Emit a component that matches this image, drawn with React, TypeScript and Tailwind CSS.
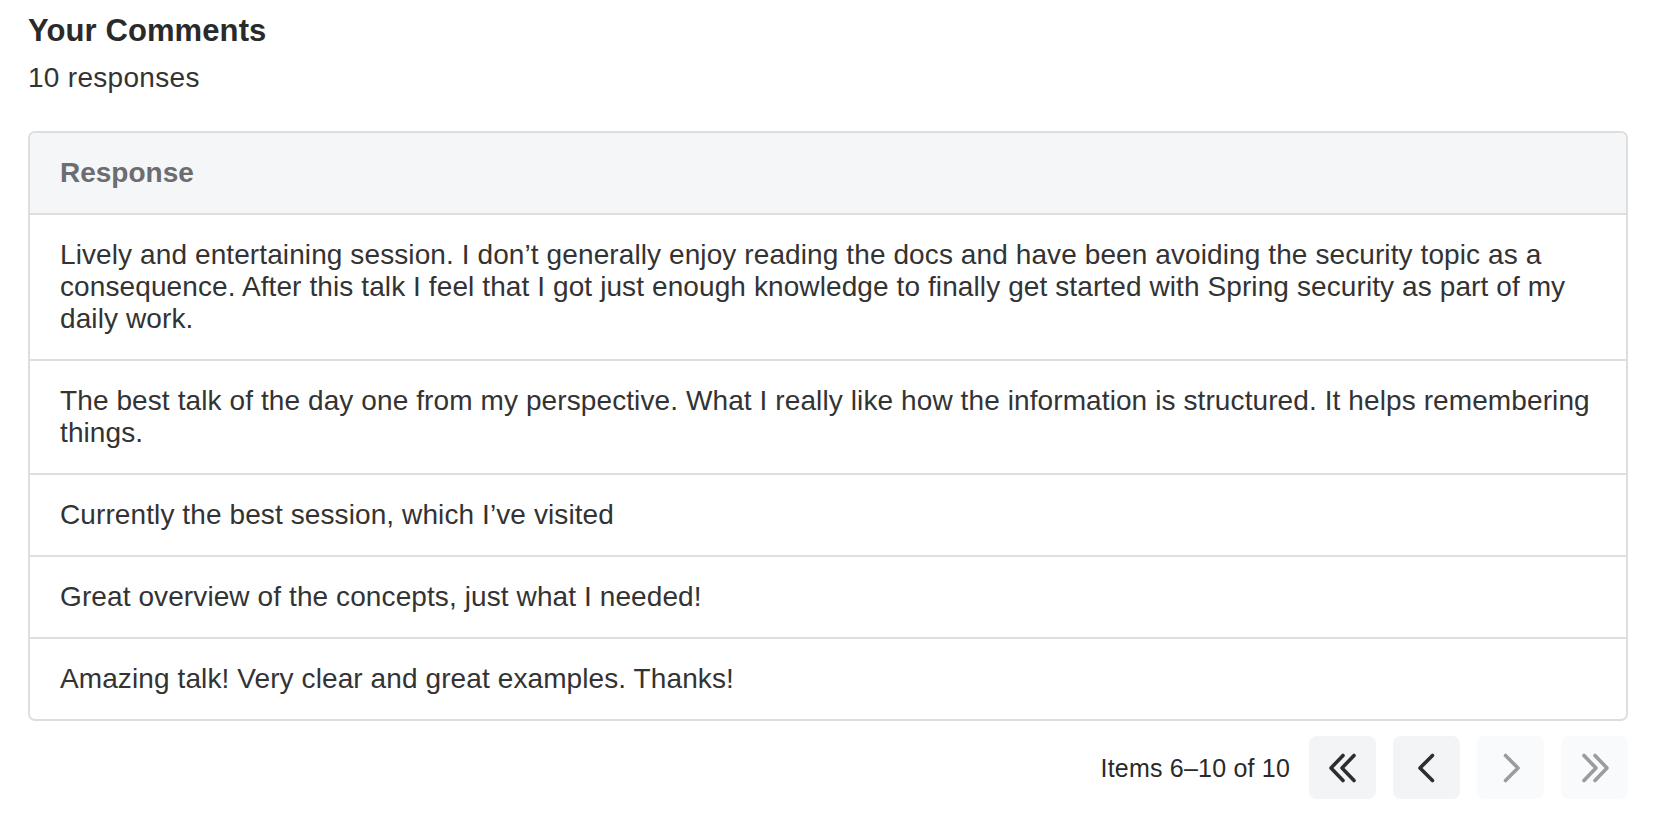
import React from "react";

type Comment = {
  id: number;
  text: string;
};

const comments: Comment[] = [
  {
    id: 6,
    text: "Lively and entertaining session. I don’t generally enjoy reading the docs and have been avoiding the security topic as a consequence. After this talk I feel that I got just enough knowledge to finally get started with Spring security as part of my daily work.",
  },
  {
    id: 7,
    text: "The best talk of the day one from my perspective. What I really like how the information is structured. It helps remembering things.",
  },
  { id: 8, text: "Currently the best session, which I’ve visited" },
  { id: 9, text: "Great overview of the concepts, just what I needed!" },
  { id: 10, text: "Amazing talk! Very clear and great examples. Thanks!" },
];

function ChevronLeft() {
  return (
    <svg width="20" height="32" viewBox="0 0 20 32" fill="none" stroke="currentColor" strokeWidth="3.6" strokeLinecap="round" strokeLinejoin="round">
      <path d="M15.5 3.5 L3 16 L15.5 28.5" />
    </svg>
  );
}

function ChevronRight() {
  return (
    <svg width="20" height="32" viewBox="0 0 20 32" fill="none" stroke="currentColor" strokeWidth="3.6" strokeLinecap="round" strokeLinejoin="round">
      <path d="M4.5 3.5 L17 16 L4.5 28.5" />
    </svg>
  );
}

function ChevronsLeft() {
  return (
    <svg width="30" height="32" viewBox="0 0 30 32" fill="none" stroke="currentColor" strokeWidth="3.6" strokeLinecap="round" strokeLinejoin="round">
      <path d="M15 3.5 L3 16 L15 28.5" />
      <path d="M26 3.5 L14 16 L26 28.5" />
    </svg>
  );
}

function ChevronsRight() {
  return (
    <svg width="30" height="32" viewBox="0 0 30 32" fill="none" stroke="currentColor" strokeWidth="3.6" strokeLinecap="round" strokeLinejoin="round">
      <path d="M4 3.5 L16 16 L4 28.5" />
      <path d="M15 3.5 L27 16 L15 28.5" />
    </svg>
  );
}

function PageButton({
  disabled,
  label,
  children,
}: {
  disabled?: boolean;
  label: string;
  children: React.ReactNode;
}) {
  return (
    <button
      type="button"
      aria-label={label}
      disabled={disabled}
      className={
        disabled
          ? "flex h-[63px] w-[67px] items-center justify-center rounded-[8px] bg-[#f9fafb] text-[#9c9c9c]"
          : "flex h-[63px] w-[67px] items-center justify-center rounded-[8px] bg-[#f3f4f6] text-[#2e2e2e]"
      }
    >
      {children}
    </button>
  );
}

export default function App() {
  return (
    <div
      className="min-h-screen bg-white px-7 pt-[13px] text-[#333333]"
      style={{ fontFamily: '"Liberation Sans", Arial, sans-serif' }}
    >
      <h1 className="text-[31px] font-bold leading-9 tracking-[0.1px] text-[#2a2a2a]">Your Comments</h1>
      <p className="mt-[13px] text-[28px] leading-[32px] tracking-[0.3px] text-[#333333]">10 responses</p>

      <div className="mt-[37px] overflow-hidden rounded-[7px] border-2 border-[#dedede]">
        <div className="border-b-2 border-[#dedede] bg-[#f5f6f8] px-[30px] py-6 text-[28px] font-bold leading-[32px] text-[#6b6d70]">
          Response
        </div>
        {comments.map((c, i) => (
          <div
            key={c.id}
            className={
              i < comments.length - 1
                ? "border-b-2 border-[#dedede] px-[30px] py-6 text-[28px] leading-[32px] tracking-[0.1px]"
                : "px-[30px] py-6 text-[28px] leading-[32px] tracking-[0.1px]"
            }
          >
            {c.text}
          </div>
        ))}
      </div>

      {/* Pagination */}
      <div className="mt-[15px] flex items-center justify-end">
        <span className="mr-[19px] text-[25px] leading-[32px] tracking-[0.2px] text-[#2a2a2a]">Items 6–10 of 10</span>
        <div className="flex gap-[17px]">
          <PageButton label="First page">
            <ChevronsLeft />
          </PageButton>
          <PageButton label="Previous page">
            <ChevronLeft />
          </PageButton>
          <PageButton label="Next page" disabled>
            <ChevronRight />
          </PageButton>
          <PageButton label="Last page" disabled>
            <ChevronsRight />
          </PageButton>
        </div>
      </div>
    </div>
  );
}
